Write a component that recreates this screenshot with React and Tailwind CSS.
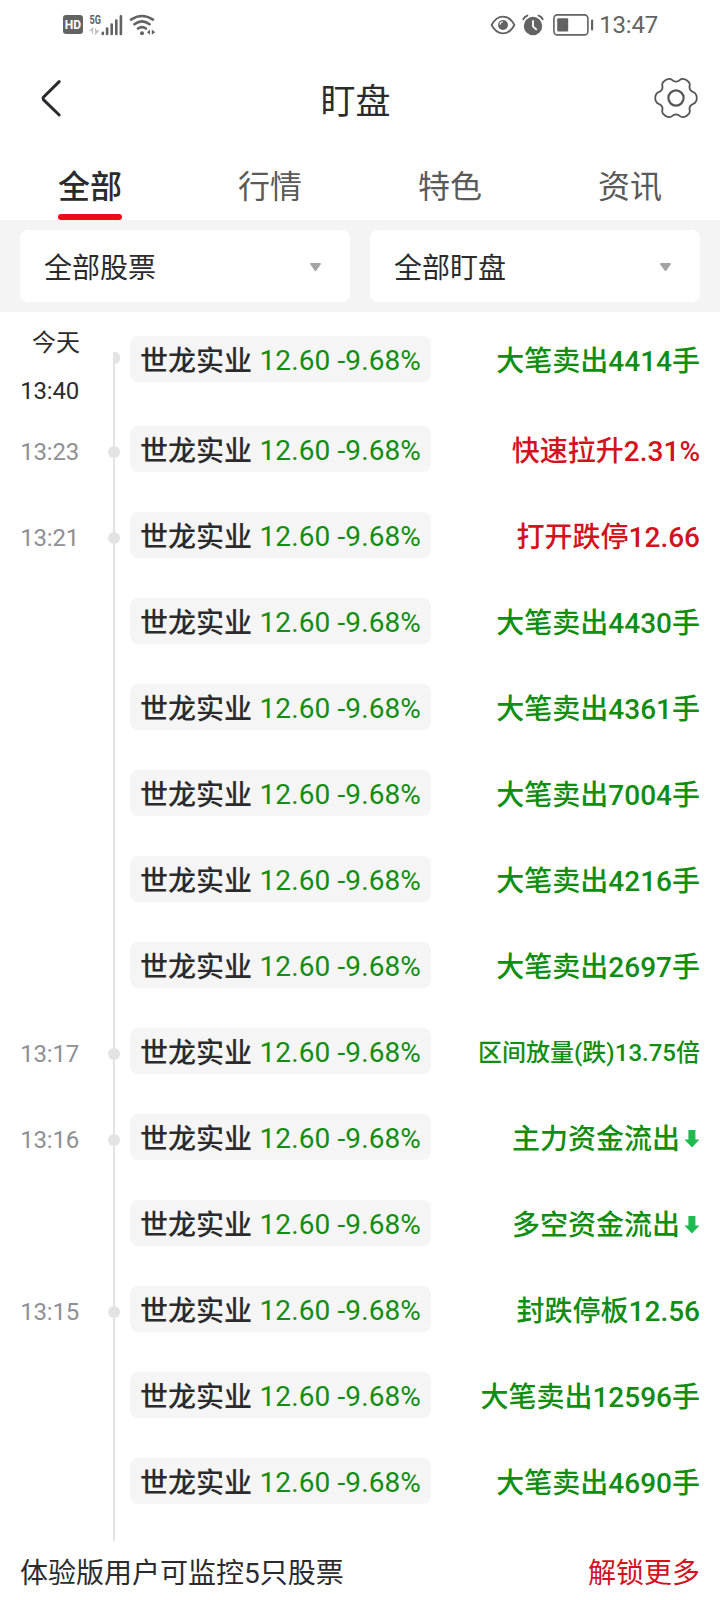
import { useState } from 'react';

const TABS = ['全部', '行情', '特色', '资讯'];

const stock = { name: '世龙实业', price: '12.60', change: '-9.68%' };

const ALERTS = [
  { day: '今天', time: '13:40', text: '大笔卖出4414手', trend: 'down' },
  { time: '13:23', text: '快速拉升2.31%', trend: 'up' },
  { time: '13:21', text: '打开跌停12.66', trend: 'up' },
  { text: '大笔卖出4430手', trend: 'down' },
  { text: '大笔卖出4361手', trend: 'down' },
  { text: '大笔卖出7004手', trend: 'down' },
  { text: '大笔卖出4216手', trend: 'down' },
  { text: '大笔卖出2697手', trend: 'down' },
  { time: '13:17', text: '区间放量(跌)13.75倍', trend: 'down', small: true },
  { time: '13:16', text: '主力资金流出', trend: 'down', arrow: true },
  { text: '多空资金流出', trend: 'down', arrow: true },
  { time: '13:15', text: '封跌停板12.56', trend: 'down' },
  { text: '大笔卖出12596手', trend: 'down' },
  { text: '大笔卖出4690手', trend: 'down' },
];

// Six-toothed gear outline: a blunt tooth every 60 degrees with rounded valleys between
const gearPath = () => {
  const at = (deg, r) => {
    const a = (deg * Math.PI) / 180;
    return `${(22 + r * Math.cos(a)).toFixed(2)} ${(22 + r * Math.sin(a)).toFixed(2)}`;
  };
  let d = `M${at(-9, 20.4)}`;
  for (let t = 0; t < 360; t += 60) {
    d += `Q${at(t, 21.4)} ${at(t + 9, 20.4)}`;
    d += `Q${at(t + 15, 20)} ${at(t + 18.5, 18.3)}`;
    d += `Q${at(t + 22, 16.6)} ${at(t + 30, 16.4)}`;
    d += `Q${at(t + 38, 16.6)} ${at(t + 41.5, 18.3)}`;
    d += `Q${at(t + 45, 20)} ${at(t + 51, 20.4)}`;
  }
  return `${d}Z`;
};

function StatusBar() {
  return (
    <div className="flex h-12 items-center justify-between pl-[63px] pr-[62px] pt-[1px] text-[#636363]">
      <div className="flex items-center">
        <span className="flex h-[19px] w-5 items-center justify-center rounded-[3px] bg-[#636363] text-[12px] font-bold leading-none text-white">
          HD
        </span>
        {/* Signal */}
        <svg className="ml-[6px]" width="36" height="24" viewBox="0 0 36 24" fill="currentColor">
          <text x="0.5" y="10.5" fontSize="12" fontWeight="700" textLength="11.5" lengthAdjust="spacingAndGlyphs">5G</text>
          <path d="M3.6 21.5V15M1.2 17.6 3.6 15v2.6zM6.6 15v6.5M6.6 21l2.8-3.2H6.6z" stroke="#c4c4c4" fill="#c4c4c4" strokeWidth="1.2" />
          <rect x="12.5" y="18.6" width="2.6" height="3.6" rx="1.2" />
          <rect x="16.8" y="14.2" width="2.6" height="8" rx="1.2" />
          <rect x="21.4" y="10.2" width="2.6" height="12" rx="1.2" />
          <rect x="26" y="6.2" width="2.6" height="16" rx="1.2" />
          <rect x="30.6" y="2" width="2.6" height="20.2" rx="1.2" />
        </svg>
        {/* Wifi */}
        <svg className="ml-[4px]" width="28" height="24" viewBox="0 0 28 24" fill="none" stroke="currentColor" strokeWidth="2.5" strokeLinecap="round">
          <path d="M2 6.6Q13 -0.8 24 6.6M5.4 11.2Q13 5.6 20.6 11.2M9 15.6Q13 12.6 17 15.6" />
          <circle cx="13" cy="20.2" r="2" fill="currentColor" stroke="none" />
          <path d="M21 16.6v5.2l-3-2.6zM22.8 16.6v5.2l3.4-2.6z" fill="currentColor" stroke="none" />
        </svg>
      </div>

      <div className="flex items-center">
        {/* Eye */}
        <svg width="26" height="20" viewBox="0 0 26 20" fill="none" stroke="currentColor" strokeWidth="1.8">
          <path d="M1.6 10Q6 1.6 13 1.6T24.4 10Q20 18.4 13 18.4T1.6 10z" />
          <circle cx="13" cy="10" r="5" fill="currentColor" stroke="none" />
          <path d="M10 9.6a3 3 0 0 1 3-2.8" stroke="#fff" strokeWidth="1.1" />
        </svg>
        {/* Alarm */}
        <svg className="ml-[6px]" width="22" height="22" viewBox="0 0 22 22">
          <circle cx="11" cy="12" r="9.2" fill="currentColor" />
          <path d="M1.4 5.2Q2.4 2.6 5.4 1.6M20.6 5.2Q19.6 2.6 16.6 1.6" fill="none" stroke="currentColor" strokeWidth="2" strokeLinecap="round" />
          <path d="M11 7v5.4l3.2 3" fill="none" stroke="#fff" strokeWidth="1.8" strokeLinecap="round" />
        </svg>
        {/* Battery */}
        <svg className="ml-[9px]" width="42" height="22" viewBox="0 0 42 22">
          <rect x="0.9" y="0.9" width="34" height="20" rx="3.5" fill="none" stroke="currentColor" strokeWidth="1.6" />
          <rect x="4.2" y="4.2" width="11" height="13.4" rx="1" fill="currentColor" />
          <rect x="38" y="5.4" width="2.2" height="11" rx="1" fill="currentColor" />
        </svg>
        <span className="ml-[4px] pt-[1px] text-2xl leading-none tracking-[-0.2px]">13:47</span>
      </div>
    </div>
  );
}

function TitleBar() {
  return (
    <div className="grid h-[100px] grid-cols-3 items-center pl-10 pr-[22px]">
      <svg width="44" height="40" viewBox="0 0 44 40" fill="none" stroke="#2b2b2d" strokeWidth="3" strokeLinecap="round" strokeLinejoin="round">
        <path d="M19.2 3.6 3.4 19.2Q2.4 20.4 3.4 21.6L19.2 37" />
      </svg>
      <h1 className="pr-[27px] pt-[9px] text-center text-[35px] leading-none text-[#2b2b2d]">盯盘</h1>
      <svg className="justify-self-end" width="44" height="44" viewBox="0 0 44 44" fill="none" stroke="#555" strokeWidth="1.8" strokeLinejoin="round">
        <path d={gearPath()} />
        <circle cx="22" cy="22" r="7.6" strokeWidth="2.2" />
      </svg>
    </div>
  );
}

function Select({ label }) {
  return (
    <button className="flex h-[72px] items-center justify-between rounded-lg bg-white pl-6 pr-[29px] text-[28px] text-[#2b2b2d]">
      <span className="pt-[5px] leading-none">{label}</span>
      <svg className="mt-[2px]" width="11" height="9" viewBox="0 0 11 9" fill="#a3a3a3">
        <path d="M1 0h9q1.2 0.3 0.6 1.4L6.2 7.8q-0.7 0.8-1.4 0L0.4 1.4Q-0.2 0.3 1 0z" />
      </svg>
    </button>
  );
}

// Vertical timeline line with an optional dot
function Rail({ first, dot }) {
  if (first) {
    return (
      <div className="ml-7 mr-[10px] flex w-3 flex-col pl-[5px] pt-10">
        <div className="flex h-3">
          <div className="w-[2px] bg-[#e3e3e3]" />
          <div className="w-[5px] rounded-r-full bg-[#e3e3e3]" />
        </div>
        <div className="w-[2px] flex-1 bg-[#e3e3e3]" />
      </div>
    );
  }

  return (
    <div className="ml-7 mr-[10px] flex w-3 flex-col items-center">
      <div className="h-[34px] w-[2px] bg-[#e3e3e3]" />
      {dot && <div className="h-3 w-3 rounded-full bg-[#e3e3e3]" />}
      <div className="w-[2px] flex-1 bg-[#e3e3e3]" />
    </div>
  );
}

function AlertRow({ alert, first, last }) {
  const color = alert.trend === 'up' ? 'text-[#d3121d]' : 'text-[#118e12]';
  const height = first ? 'h-[100px]' : last ? 'h-[97px]' : 'h-[86px]';

  return (
    <li className={`flex ${height}`}>
      <div className={`flex w-[60px] flex-col items-end whitespace-nowrap text-2xl leading-6 ${first ? 'pt-[18px] text-[#2b2b2d]' : 'pt-7 text-[#8f8f94]'}`}>
        {alert.day && <span className="mb-[24px] pt-[1px]">{alert.day}</span>}
        <span className="pr-[1px] tracking-[-0.2px]">{alert.time}</span>
      </div>
      <Rail first={first} dot={Boolean(alert.time)} />
      <div className={`flex flex-1 items-start justify-between ${first ? 'pt-6' : 'pt-[14px]'}`}>
        <div className="flex h-[46px] w-[301px] items-center justify-between whitespace-nowrap rounded-lg bg-[#f5f5f5] px-[10px] pt-[4px] text-[28px] leading-none">
          <span className="pt-[2px] font-medium text-[#2b2b2d]">{stock.name}</span>
          <span className="tracking-[0.12px] text-[#118e12]">{stock.price} {stock.change}</span>
        </div>
        <div className={`flex h-[46px] items-center whitespace-nowrap font-medium leading-none ${alert.small ? 'pt-[4px] text-2xl' : 'pt-[6px] text-[28px]'} ${color}`}>
          <span>{alert.text}</span>
          {alert.arrow && (
            <svg className="mb-[2px] ml-1" width="16" height="18" viewBox="0 0 16 18" fill="#1fbb50">
              <path d="M4.4 0h7v9.6h4L8 17.5 0.4 9.6h4z" />
            </svg>
          )}
        </div>
      </div>
    </li>
  );
}

export default function App() {
  const [activeTab, setActiveTab] = useState('全部');

  return (
    <div className="flex h-[1600px] w-[720px] flex-col overflow-hidden bg-white font-[Roboto,'Noto_Sans_CJK_SC',sans-serif]">
      <StatusBar />
      <TitleBar />

      {/* Tabs */}
      <div className="grid h-[72px] grid-cols-4">
        {TABS.map((tab) => (
          <button
            key={tab}
            onClick={() => setActiveTab(tab)}
            className={`flex flex-col items-center justify-between pt-[23px] text-[32px] leading-none ${
              tab === activeTab ? 'font-medium text-[#2b2b2d]' : 'text-[#5a5a5a]'
            }`}
          >
            <span>{tab}</span>
            {tab === activeTab && <span className="h-[6px] w-16 rounded-full bg-[#ee0a17]" />}
          </button>
        ))}
      </div>

      {/* Filters */}
      <div className="grid h-[92px] grid-cols-2 gap-5 bg-[#f4f4f4] px-5 py-[10px]">
        <Select label="全部股票" />
        <Select label="全部盯盘" />
      </div>

      {/* Timeline */}
      <ul className="px-5">
        {ALERTS.map((alert, i) => (
          <AlertRow key={i} alert={alert} first={i === 0} last={i === ALERTS.length - 1} />
        ))}
      </ul>

      {/* Footer */}
      <div className="flex flex-1 items-center justify-between px-5 pt-[7px] text-[28px] leading-none">
        <span className="text-[#2b2b2d]">体验版用户可监控5只股票</span>
        <button className="text-[#d3121d]">解锁更多</button>
      </div>
    </div>
  );
}
